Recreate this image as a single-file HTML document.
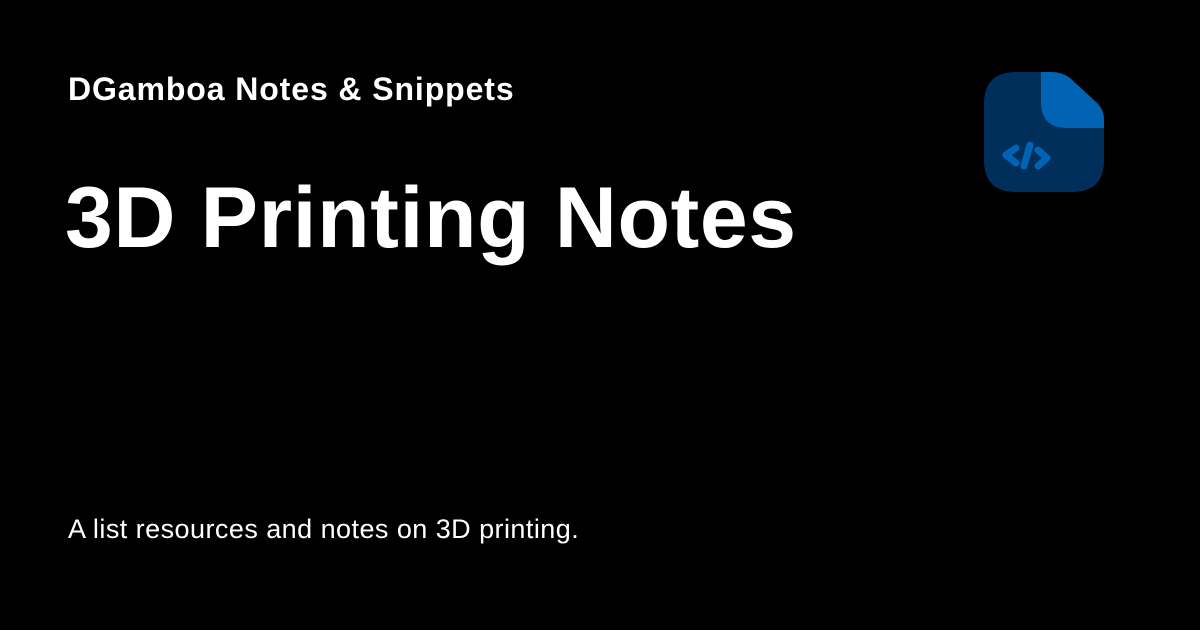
<!DOCTYPE html>
<html><head><style>
body{margin:0;width:1200px;height:630px;background:#000;overflow:hidden;font-family:"Liberation Sans",sans-serif;color:#fff;position:relative}
.a{position:absolute;left:68px;white-space:nowrap}
</style></head><body>
<div class="a" style="top:71px;font-size:32px;font-weight:bold;letter-spacing:0.9px">DGamboa Notes &amp; Snippets</div>
<div class="a" style="left:65px;top:169px;font-size:86px;font-weight:bold;letter-spacing:0.6px">3D Printing Notes</div>
<div class="a" style="top:514px;font-size:27px;letter-spacing:0.45px">A list resources and notes on 3D printing.</div>
<svg style="position:absolute;left:984px;top:72px" width="120" height="120" viewBox="0 0 120 120">
<path d="M0 32Q0 0 32 0H57V30Q57 56 83 56H120V88Q120 120 88 120H32Q0 120 0 88Z" fill="#002f5c"/>
<path d="M57 0H68Q78 0 86 6L112 30Q120 37 120 48V56H83Q57 56 57 30Z" fill="#0063b3"/>
<g fill="none" stroke="#0063b3" stroke-width="7" stroke-linecap="round" stroke-linejoin="round">
<path d="M32 76L22 83L32 91"/><path d="M46 73L40 94"/><path d="M54 78L63 86L54 94"/>
</g></svg>
</body></html>
